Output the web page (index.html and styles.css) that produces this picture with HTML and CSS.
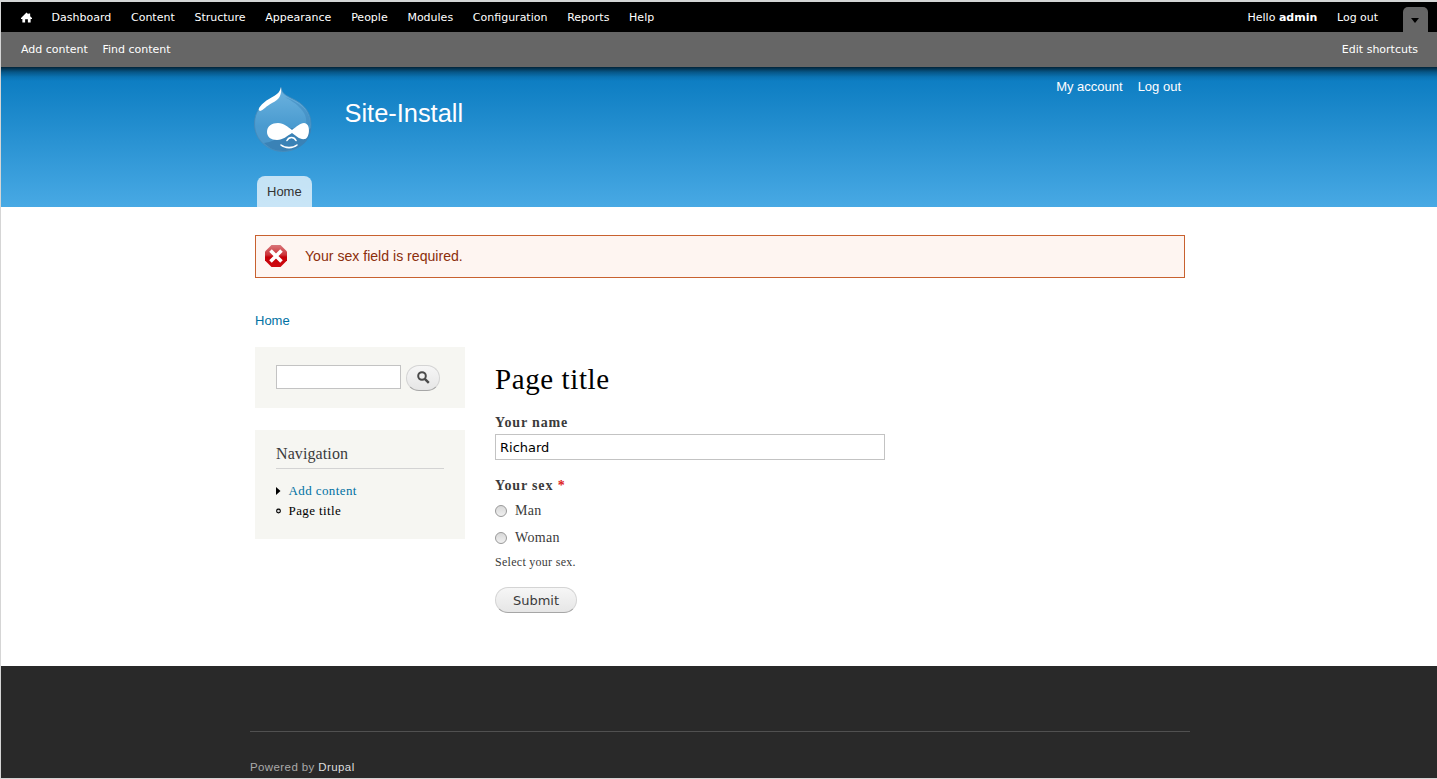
FILE: index.html
```html
<!DOCTYPE html>
<html lang="en">
<head>
    <meta charset="UTF-8">
    <meta name="viewport" content="width=device-width, initial-scale=1.0">
    <title>Page title | Site-Install</title>
    <link rel="stylesheet" href="styles.css">
</head>
<body>
    <!-- Admin toolbar -->
    <div class="toolbar">
        <div class="toolbar-menu">
            <a class="home-link" href="#" title="Home">
                <svg width="11" height="11" viewBox="0 0 12 11"><path fill="#fff" d="M6 0 8 2V1h2v3l2 2v1h-1.500v4H7.500V7.500h-3V11h-3V7H0V6z"/></svg>
            </a>
            <a href="#">Dashboard</a>
            <a href="#">Content</a>
            <a href="#">Structure</a>
            <a href="#">Appearance</a>
            <a href="#">People</a>
            <a href="#">Modules</a>
            <a href="#">Configuration</a>
            <a href="#">Reports</a>
            <a href="#">Help</a>
            <div class="toolbar-user">
                <a href="#">Hello <strong>admin</strong></a>
                <a href="#">Log out</a>
                <a class="toolbar-toggle" href="#" title="Hide shortcuts">
                    <svg width="8" height="5" viewBox="0 0 8 5"><path d="M0 0h8L4 5z"/></svg>
                </a>
            </div>
        </div>
        <div class="toolbar-drawer">
            <a href="#">Add content</a>
            <a href="#">Find content</a>
            <a class="edit-shortcuts" href="#">Edit shortcuts</a>
        </div>
    </div>

    <header class="header">
        <div class="header-inner">
            <div class="branding">
                <svg class="logo" width="58" height="65" viewBox="0 0 58 65">
                    <defs>
                        <linearGradient id="drop" x1="0" y1="0" x2="0" y2="1">
                            <stop offset="0" stop-color="#6db3df"/>
                            <stop offset="0.6" stop-color="#4a9bd0"/>
                            <stop offset="1" stop-color="#4a94c8"/>
                        </linearGradient>
                    </defs>
                    <path fill="url(#drop)" stroke="#4689b8" stroke-width=".8" d="M27 .5c1 6 5 8 11 11 11 5 19 13 19 26 0 16-13 27-28 27S.5 53 .5 37c0-13 7-20 16-25C23 8 26 6 27 .5z"/>
                    <path fill="#3a82b6" d="M10 56c8-1 11-3 17-8 7-6 9-8 15-6 7 4 11 3 15-1 0 14-13 23-28 23-8 0-14-3-19-8z"/>
                    <path fill="#3b86bb" opacity=".5" d="M31 10c5 3 11 6 16 12 5 5 6 11 5 17l4-1c1-14-9-20-18-25z"/>
                    <path fill="#fff" d="M27 0c1 8-2 13-9 16-6 3-8 7-12 8-4-1 2-8 9-12 7-4 11-6 12-12z"/>
                    <path fill="#fff" d="M13 45c0-6 5-9 11-9 6 0 10 4 14 7 4-3 8-7 12-7 7 0 6 15 1 16-5 1-9-3-13-6-5 3-9 7-15 7-6 0-10-3-10-8z"/>
                    <path fill="none" stroke="#fff" stroke-width="1.600" stroke-linecap="round" d="M33 53.500c2-4 7-4 9 0M27 58c4 3.500 12 3.500 16 0"/>
                </svg>
                <a class="site-name" href="#">Site-Install</a>
                <nav class="user-menu">
                    <a href="#">My account</a>
                    <a href="#">Log out</a>
                </nav>
            </div>
            <nav class="main-menu"><a href="#">Home</a></nav>
        </div>
    </header>

    <main class="main">
        <div class="message-error">
            <svg width="22" height="22" viewBox="0 0 22 22">
                <defs>
                    <linearGradient id="stop" x1="0" y1="0" x2="0" y2="1">
                        <stop offset="0" stop-color="#d9767a"/>
                        <stop offset="0.45" stop-color="#cc3338"/>
                        <stop offset="0.55" stop-color="#c40008"/>
                        <stop offset="1" stop-color="#cf0a10"/>
                    </linearGradient>
                </defs>
                <path fill="url(#stop)" d="M6.500 0h9L22 6.500v9L15.500 22h-9L0 15.500v-9z"/>
                <path fill="none" stroke="#fff" stroke-width="3.600" d="m5.500 5.500 11 11M16.500 5.500l-11 11"/>
            </svg>
            <span>Your sex field is required.</span>
        </div>

        <div class="breadcrumb"><a href="#">Home</a></div>

        <div class="columns">
            <aside class="sidebar">
                <form class="block search-block">
                    <input class="search-input" type="text" aria-label="Search">
                    <button class="search-button" type="button" title="Search">
                        <svg width="13" height="13" viewBox="0 0 13 13"><circle cx="5" cy="5" r="3.800" fill="none" stroke="#4a4a4a" stroke-width="2"/><path stroke="#4a4a4a" stroke-width="2.400" d="m7.800 7.800 4 4"/></svg>
                    </button>
                </form>
                <div class="block nav-block">
                    <h2>Navigation</h2>
                    <ul>
                        <li><svg width="5" height="8" viewBox="0 0 5 8"><path d="M0 0v8l4.500-4z"/></svg><a href="#">Add content</a></li>
                        <li><svg width="5" height="6" viewBox="0 0 5 6"><circle cx="2.500" cy="3" r="1.900" fill="#ddd" stroke="#000" stroke-width="1.100"/></svg><a class="active" href="#">Page title</a></li>
                    </ul>
                </div>
            </aside>

            <section class="content">
                <h1>Page title</h1>
                <form>
                    <label class="form-label name-label" for="name">Your name</label>
                    <input class="form-text" id="name" type="text" value="Richard">
                    <div class="form-label sex-label">Your sex <span class="required">*</span></div>
                    <label class="radio-row"><input type="radio" name="sex"><span>Man</span></label>
                    <label class="radio-row"><input type="radio" name="sex"><span>Woman</span></label>
                    <div class="description">Select your sex.</div>
                    <button class="form-submit" type="button">Submit</button>
                </form>
            </section>
        </div>
    </main>

    <footer class="footer">
        <div class="footer-inner">
            <span>Powered by <a href="#">Drupal</a></span>
        </div>
    </footer>
</body>
</html>
```
FILE: styles.css
```css
* {
    margin: 0;
    padding: 0;
    box-sizing: border-box;
}

body {
    display: flex;
    flex-direction: column;
    height: 779px;
    overflow: hidden;
    border: 1px solid #d5d5d5;
    border-top: 2px solid #d3d5d5;
    border-right: 0;
    background: #fff;
    color: #3b3b3b;
    font-family: Georgia, "Liberation Serif", serif;
}

a {
    color: #0071a3;
    text-decoration: none;
}

svg {
    display: block;
    flex-shrink: 0;
}

/* Toolbar */
.toolbar {
    flex-shrink: 0;
    font: 11px/15px "DejaVu Sans", sans-serif;
}

.toolbar a {
    color: #fff;
}

.toolbar-menu {
    display: flex;
    align-items: center;
    height: 30px;
    padding: 0 9px 0 10px;
    background: #000;
}

.toolbar-menu a {
    padding: 0 9.87px;
}

.toolbar-user {
    display: flex;
    align-items: center;
    align-self: stretch;
    margin-left: auto;
}

.toolbar-menu .toolbar-toggle {
    align-self: flex-end;
    width: 25px;
    height: 25px;
    margin-left: 15px;
    padding: 11px 8px 0;
    border-radius: 5px 5px 0 0;
    background: #666;
}

.toolbar-drawer {
    display: flex;
    gap: 14.5px;
    height: 35px;
    padding: 10px 19px 0 20px;
    background: #666;
}

.edit-shortcuts {
    margin-left: auto;
}

/* Header, with the toolbar's shadow on top */
.header {
    flex-shrink: 0;
    height: 140px;
    background:
        linear-gradient(rgba(0, 0, 0, 0.7), rgba(0, 0, 0, 0.3) 5px, rgba(0, 0, 0, 0.08) 10px, transparent 14px),
        linear-gradient(#0779bf, #48a9e4);
    font-family: "Liberation Sans", sans-serif;
}

.header-inner {
    display: flex;
    flex-direction: column;
    justify-content: space-between;
    width: 930px;
    height: 100%;
    margin: 0 auto;
}

.header a {
    color: #fffeff;
}

.branding {
    display: flex;
    padding-top: 10px;
}

.logo {
    margin: 10px 32.5px 0 0;
}

.site-name {
    margin-top: 21px;
    font-size: 25.4px;
    line-height: 30px;
}

.user-menu {
    display: flex;
    gap: 15px;
    margin-left: auto;
    padding-right: 3px;
    font-size: 13px;
    line-height: 20px;
}

.main-menu {
    display: flex;
    padding-left: 3px;
}

.header .main-menu a {
    height: 31px;
    padding: 0 10px;
    border-radius: 8px 8px 0 0;
    background: rgba(255, 255, 255, 0.7);
    color: #333;
    font-size: 13px;
    line-height: 32px;
}

/* Main */
.main {
    flex: 1;
    width: 932px;
    margin: 0 auto;
    padding: 28px 0 0 2px;
}

.message-error {
    display: flex;
    align-items: center;
    gap: 18px;
    height: 43px;
    padding: 0 0 2px 9px;
    border: 1px solid #c8612f;
    background: #fef5f1;
    color: #8c2e0b;
    font: 14.1px "Liberation Sans", sans-serif;
}

.breadcrumb {
    margin-top: 33px;
    font: 13px/20px "Liberation Sans", sans-serif;
}

.columns {
    display: flex;
    gap: 30px;
    margin-top: 16px;
}

.sidebar {
    width: 210px;
}

.block {
    background: #f6f6f2;
}

.search-block {
    display: flex;
    align-items: flex-start;
    gap: 5px;
    height: 61px;
    padding: 18px 21px;
}

.search-input {
    width: 125px;
    height: 24px;
    border: 1px solid #c3c3c3;
}

.search-button,
.form-submit {
    border: 1px solid #d4d4d4;
    border-bottom-color: #a6a6a6;
    border-radius: 13px;
    background: linear-gradient(#f6f6f6, #e6e6e6);
    color: #3a3a3a;
}

.search-button {
    width: 34px;
    height: 26px;
    padding: 0 0 2px 10px;
}

.nav-block {
    height: 109px;
    margin-top: 22px;
    padding: 15px 21px;
}

.nav-block h2 {
    height: 24px;
    border-bottom: 1px solid #d3d3d3;
    font-size: 16px;
    font-weight: normal;
    letter-spacing: 0.1px;
    line-height: 18px;
}

.nav-block ul {
    margin-top: 12px;
    list-style: none;
}

.nav-block li {
    display: flex;
    align-items: center;
    gap: 7.5px;
    height: 20px;
    font-size: 13px;
    letter-spacing: 0.4px;
}

.nav-block .active {
    color: #000;
}

/* Content */
.content {
    padding-top: 15px;
}

.content h1 {
    color: #000;
    font-size: 29px;
    font-weight: normal;
    letter-spacing: 0.6px;
    line-height: 34px;
}

.form-label {
    display: block;
    font-size: 14px;
    font-weight: bold;
    letter-spacing: 0.85px;
    line-height: 18px;
}

.name-label {
    margin-top: 18px;
}

.form-text {
    display: block;
    width: 390px;
    height: 26px;
    margin-top: 2px;
    padding: 1px 4px 0;
    border: 1px solid #c3c3c3;
    color: #000;
    font: 13px "DejaVu Sans", sans-serif;
}

.sex-label {
    margin-top: 17px;
    margin-bottom: 2px;
}

.required {
    color: #d22;
}

.radio-row {
    display: flex;
    align-items: center;
    gap: 8px;
    height: 27px;
    font-size: 14px;
    letter-spacing: 0.3px;
}

.radio-row input {
    appearance: none;
    width: 12px;
    height: 12px;
    margin-top: 1px;
    border: 1px solid #999;
    border-radius: 50%;
    background: linear-gradient(#d8d8d8, #f0f0f0);
}

.description {
    margin-top: 3px;
    font-size: 12px;
    letter-spacing: 0.28px;
    line-height: 17px;
}

.form-submit {
    width: 82px;
    height: 26px;
    margin-top: 16px;
    font: 13px "DejaVu Sans", sans-serif;
}

/* Footer */
.footer {
    flex-shrink: 0;
    height: 112px;
    padding: 65px 0 0 2px;
    background: #292929;
}

.footer-inner {
    width: 940px;
    margin: 0 auto;
    padding-top: 27px;
    border-top: 1px solid #505050;
    color: #aaa;
    font: 11.5px/17px "Liberation Sans", sans-serif;
    letter-spacing: 0.4px;
}

.footer a {
    color: #ddd;
}
```
